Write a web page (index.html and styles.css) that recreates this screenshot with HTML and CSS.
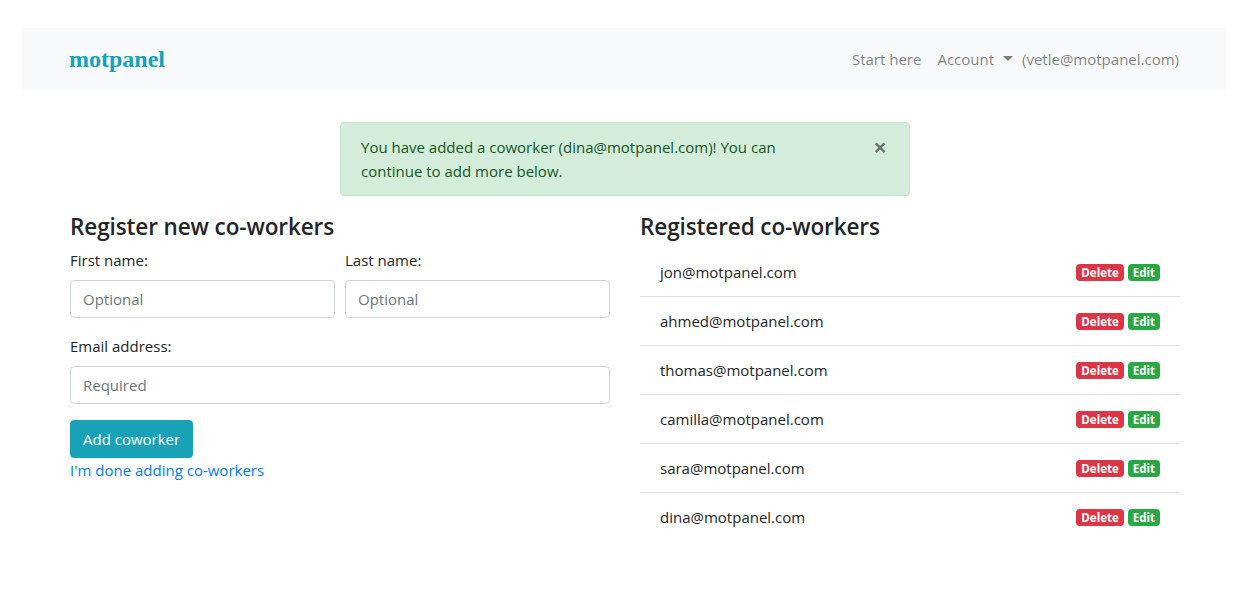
FILE: index.html
```html
<!DOCTYPE html>
<html lang="en">
<head>
<meta charset="utf-8">
<title>motpanel</title>
<link rel="stylesheet" href="styles.css">
</head>
<body>
<nav class="navbar">
  <div class="container nav-inner">
    <a class="brand" href="#">motpanel</a>
    <div class="nav-right">
      <a class="nav-link" href="#">Start here</a>
      <a class="nav-link dropdown" href="#">Account<span class="caret"></span></a>
      <span class="nav-text">(vetle@motpanel.com)</span>
    </div>
  </div>
</nav>

<main class="container">
  <div class="alert-wrap">
    <div class="alert">
      <span>You have added a coworker (dina@motpanel.com)! You can continue to add more below.</span>
      <button class="close" type="button">&times;</button>
    </div>
  </div>

  <div class="row">
    <section class="col">
      <h4 class="heading">Register new co-workers</h4>
      <div class="form-row">
        <div class="field">
          <label class="label">First name:</label>
          <input class="input" type="text" placeholder="Optional">
        </div>
        <div class="field">
          <label class="label">Last name:</label>
          <input class="input" type="text" placeholder="Optional">
        </div>
      </div>
      <div class="field">
        <label class="label">Email address:</label>
        <input class="input" type="email" placeholder="Required">
      </div>
      <button class="btn" type="button">Add coworker</button>
      <a class="done-link" href="#">I'm done adding co-workers</a>
    </section>

    <section class="col">
      <h4 class="heading">Registered co-workers</h4>
      <ul class="list">
        <li class="item"><span>jon@motpanel.com</span><span class="badges"><span class="badge danger">Delete</span><span class="badge success">Edit</span></span></li>
        <li class="item"><span>ahmed@motpanel.com</span><span class="badges"><span class="badge danger">Delete</span><span class="badge success">Edit</span></span></li>
        <li class="item"><span>thomas@motpanel.com</span><span class="badges"><span class="badge danger">Delete</span><span class="badge success">Edit</span></span></li>
        <li class="item"><span>camilla@motpanel.com</span><span class="badges"><span class="badge danger">Delete</span><span class="badge success">Edit</span></span></li>
        <li class="item"><span>sara@motpanel.com</span><span class="badges"><span class="badge danger">Delete</span><span class="badge success">Edit</span></span></li>
        <li class="item"><span>dina@motpanel.com</span><span class="badges"><span class="badge danger">Delete</span><span class="badge success">Edit</span></span></li>
      </ul>
    </section>
  </div>
</main>
</body>
</html>
```
FILE: styles.css
```css
* { box-sizing: border-box; }

body {
  margin: 0;
  font-family: "Open Sans", "Noto Sans", sans-serif;
  font-size: 15px;
  line-height: 24px;
  color: #212529;
  background: #fff;
}

a { text-decoration: none; }

.container {
  width: 1110px;
  margin: 0 auto;
}

.navbar {
  margin: 28px 24px 0 22px;
  background: #f8f9fa;
  padding: 8px 0;
}

.nav-inner {
  display: flex;
  align-items: center;
  justify-content: space-between;
}

.brand {
  font-family: "Liberation Serif", "Times New Roman", serif;
  font-weight: 700;
  font-size: 24px;
  line-height: 36px;
  padding: 5px 0;
  color: #17a2b8;
}

.nav-right {
  display: flex;
  align-items: center;
}

.nav-link {
  color: rgba(0, 0, 0, 0.5);
  padding: 8px 8px;
}

.caret {
  display: inline-block;
  margin-left: 9px;
  vertical-align: 4px;
  border-top: 5px solid;
  border-left: 5px solid transparent;
  border-right: 5px solid transparent;
}

.nav-text {
  color: rgba(0, 0, 0, 0.5);
  padding: 8px 0 8px 1px;
}

.alert-wrap {
  display: flex;
  justify-content: center;
  margin-top: 32px;
}

.alert {
  position: relative;
  width: 570px;
  padding: 12px 76px 12px 20px;
  background: #d4edda;
  border: 1px solid #c3e6cb;
  border-radius: 4px;
  color: #155724;
  margin-bottom: 16px;
}

.close {
  position: absolute;
  top: 0;
  right: 0;
  padding: 12px 22px;
  background: transparent;
  border: 0;
  font-family: "Open Sans", sans-serif;
  font-size: 24px;
  line-height: 24px;
  font-weight: 700;
  color: #000;
  opacity: 0.5;
  text-shadow: 0 1px 0 #fff;
}

.row {
  display: flex;
  gap: 30px;
}

.col {
  flex: 1 1 0;
}

.heading {
  margin: 0 0 7px;
  font-size: 22.5px;
  line-height: 29px;
  font-weight: 600;
  letter-spacing: -0.1px;
}

.form-row {
  display: flex;
  gap: 10px;
  margin-top: 1px;
}

.form-row .field { flex: 1 1 0; }

.field {
  display: flex;
  flex-direction: column;
  margin-bottom: 16px;
}

.label {
  margin-bottom: 8px;
}

.input {
  height: 38px;
  padding: 6px 12px;
  font-family: inherit;
  font-size: 15px;
  color: #495057;
  border: 1px solid #ced4da;
  border-radius: 4px;
  background: #fff;
}

.input::placeholder { color: #6c757d; }

.btn {
  display: block;
  height: 38px;
  padding: 6px 12px;
  font-family: inherit;
  font-size: 15px;
  line-height: 24px;
  color: #fff;
  background: #17a2b8;
  border: 1px solid #17a2b8;
  border-radius: 4px;
}

.done-link {
  display: block;
  color: #007bff;
}

.list {
  list-style: none;
  margin: 0;
  padding: 0;
}

.item {
  display: flex;
  justify-content: space-between;
  align-items: center;
  padding: 12px 20px;
  border-bottom: 1px solid rgba(0, 0, 0, 0.125);
}

.item:last-child { border-bottom: 0; }

.badges {
  display: flex;
  gap: 4px;
}

.badge {
  display: inline-block;
  padding: 2px 5px;
  font-size: 11.5px;
  line-height: 13px;
  font-weight: 700;
  color: #fff;
  border-radius: 4px;
}

.danger { background: #dc3545; }
.success { background: #28a745; }
```
